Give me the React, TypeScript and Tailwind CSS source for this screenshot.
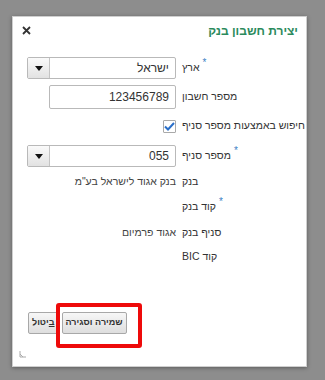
import React from 'react';

const FONT = { fontFamily: '"Liberation Sans", Arial, sans-serif' };

/** Select-like field with the arrow button on the left (RTL end). */
function SelectField({ value }: { value: string }) {
  return (
    <div className="flex h-[22px] w-[149px] overflow-hidden rounded-[2px] border border-[#b9b9b9] bg-white">
      <div className="flex-1 pr-[6px] text-right text-[12px] leading-[20px] text-[#333]">{value}</div>
      <div className="flex w-[22px] items-center justify-center border-r border-[#c4c4c4] bg-gradient-to-b from-[#fafafa] to-[#e2e2e2]">
        <svg width="8" height="5" viewBox="0 0 8 5">
          <path d="M0 0h8L4 5z" fill="#111" />
        </svg>
      </div>
    </div>
  );
}

function Label({ text, required }: { text: string; required?: boolean }) {
  return (
    <div className="flex w-[116px] shrink-0 justify-end">
      <span className="relative whitespace-nowrap text-[10.5px] text-[#333]">
        {required && <span className="absolute -right-[7px] -top-[5px] text-[10px] text-[#3b7fc4]">*</span>}
        {text}
      </span>
    </div>
  );
}

export default function App() {
  return (
    <div className="h-[380px] w-[325px] bg-[#8d8d8d] pl-[12px] pt-[16px]" style={FONT}>
      <div
        dir="rtl"
        className="relative flex h-[351px] w-[295px] flex-col border border-[#cfcfcf] bg-white pr-[8px] shadow-[0_1px_4px_rgba(0,0,0,0.35)]"
      >
        <div className="flex h-[26px] items-center justify-between pl-[9px] pt-[1px]">
          <span className="text-[12px] font-bold text-[#2b8a5c]">יצירת חשבון בנק</span>
          <svg width="9" height="9" viewBox="0 0 9 9">
            <path d="M1 1l7 7M8 1L1 8" stroke="#333" strokeWidth="1.8" />
          </svg>
        </div>

        <div className="mt-[14px] flex h-[22px] items-center gap-[6px]">
          <Label text="ארץ" required />
          <SelectField value="ישראל" />
        </div>

        <div className="mt-[6px] flex h-[24px] items-center gap-[6px]">
          <Label text="מספר חשבון" />
          <div className="h-[24px] w-[127px] rounded-[2px] border border-[#b9b9b9] pr-[6px] text-right text-[12px] leading-[22px] text-[#333]">
            123456789
          </div>
        </div>

        <div className="mt-[10px] flex h-[14px] items-center gap-[6px]">
          <Label text="חיפוש באמצעות מספר סניף" />
          <div className="flex h-[13px] w-[13px] items-center justify-center rounded-[1px] border border-[#a9a9a9] bg-white">
            <svg width="11" height="9" viewBox="0 0 11 9">
              <path d="M1 4.5l3 3L10 1" stroke="#2a6fc9" strokeWidth="2" fill="none" />
            </svg>
          </div>
        </div>

        <div className="mt-[12px] flex h-[22px] items-center gap-[6px]">
          <Label text="מספר סניף" required />
          <SelectField value="055" />
        </div>

        <div className="mt-[7px] flex h-[16px] items-center gap-[6px]">
          <Label text="בנק" />
          <span className="text-[10.5px] text-[#444]">בנק אגוד לישראל בע"מ</span>
        </div>

        <div className="mt-[9px] flex h-[16px] items-center gap-[6px]">
          <Label text="קוד בנק" required />
        </div>

        <div className="mt-[10px] flex h-[16px] items-center gap-[6px]">
          <Label text="סניף בנק" />
          <span className="text-[10.5px] text-[#444]">אגוד פרמיום</span>
        </div>

        <div className="mt-[8px] flex h-[16px] items-center gap-[6px]">
          <Label text="קוד BIC" />
        </div>

        <div className="mb-[32px] mt-auto flex justify-end gap-[3px] pl-[15px]">
          <button className="h-[22px] rounded-[2px] border border-[#a8a8a8] bg-gradient-to-b from-[#f7f7f7] to-[#dedede] px-[3px] text-[9px] font-bold text-[#333]">
            שמירה וסגירה
          </button>
          <button className="h-[22px] rounded-[2px] border border-[#a8a8a8] bg-gradient-to-b from-[#f7f7f7] to-[#dedede] px-[3px] text-[9px] font-bold text-[#333]">
            <span className="underline">ב</span>יטול
          </button>
        </div>

        <div className="absolute left-[43px] top-[286px] h-[45px] w-[86px] rounded-[3px] border-[4px] border-[#ee0a0a]" />

        <svg className="absolute bottom-[8px] left-[6px]" width="8" height="8" viewBox="0 0 8 8">
          <path d="M1 1v6h6M1 4l3 3" stroke="#aaa" strokeWidth="1" fill="none" />
        </svg>
      </div>
    </div>
  );
}
